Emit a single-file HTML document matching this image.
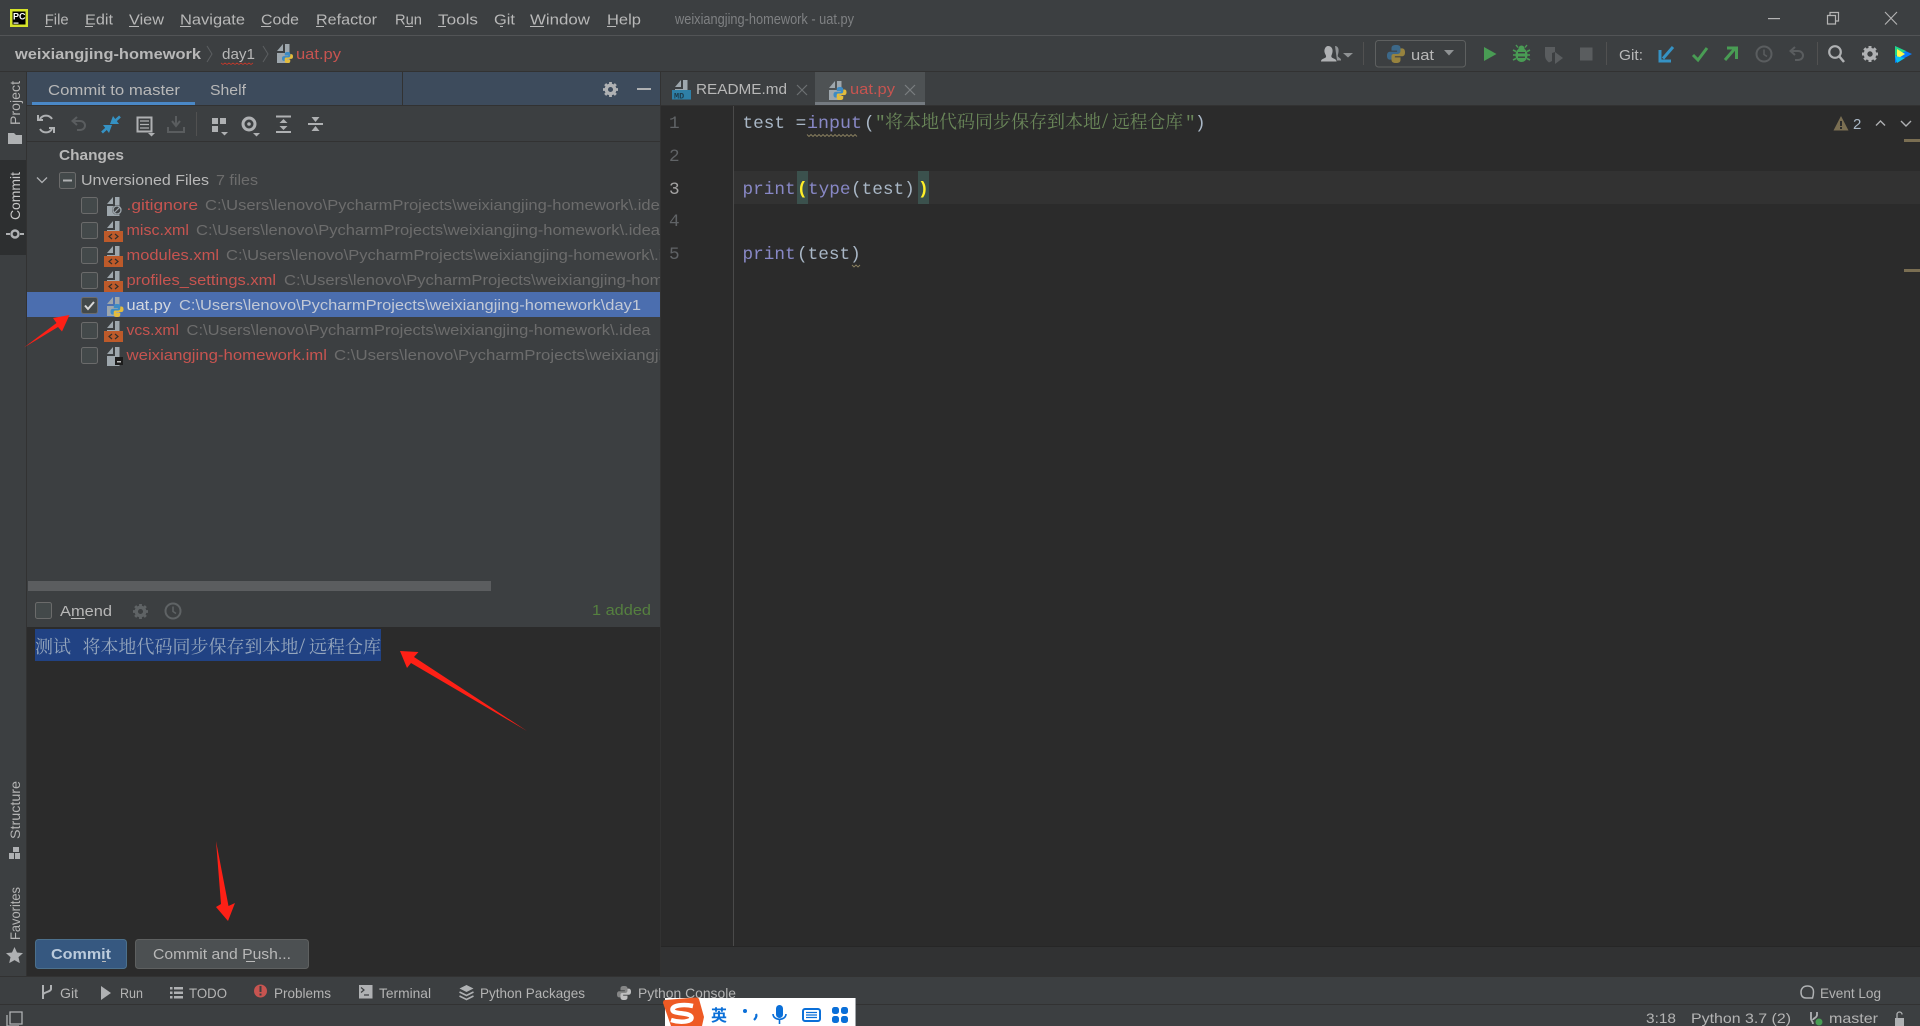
<!DOCTYPE html>
<html><head><meta charset="utf-8"><title>weixiangjing-homework - uat.py</title>
<style>html,body{margin:0;padding:0;background:#3c3f41;width:1920px;height:1026px;overflow:hidden}svg{display:block}
text{font-family:"Liberation Sans","Noto Sans CJK SC",sans-serif;font-size:15px;white-space:pre}
.m{font-family:"Liberation Mono",monospace;font-size:17.7px}
.cj{font-family:"Liberation Serif","Noto Serif CJK SC",serif;font-size:18px}
.n{fill:#c75450}.p{fill:#6c6c6c}.b{fill:#b8b8b8}.s{font-size:14px;fill:#b4b4b4}</style></head>
<body>
<svg width="1920" height="1026" viewBox="0 0 1920 1026" xmlns="http://www.w3.org/2000/svg">
<defs>
<clipPath id="cl"><rect x="27" y="140" width="633" height="440"/></clipPath>
<symbol id="py" viewBox="0 0 16 16" overflow="visible"><path d="M8 0C5 0 4 1 4 3v2h5v1H3C1 6 0 7 0 9.500S1 13 3 13h1v-2c0-2 1-3 3-3h3c1.500 0 2-1 2-2V3c0-2-1-3-4-3z" fill="#3d8bc4"/><path d="M8 16c3 0 4-1 4-3v-2H7v-1h6c2 0 3-1 3-3.500S15 3 13 3h-1v2c0 2-1 3-3 3H6C4.500 8 4 9 4 10v3c0 2 1 3 4 3z" fill="#e3bc3c"/></symbol>
<g id="fi"><path d="M1 8L7 8L7 1Z" fill="#9ea7ad"/><path d="M9 1H13.500V20H1V10H9Z" fill="#9ea7ad"/></g>
<g id="fit"><path d="M1 8L7 8L7 1Z" fill="#9ea7ad"/><path d="M9 1H13.500V11H1V10H9Z" fill="#9ea7ad"/></g>
<g id="xml"><path d="M3 8L9 8L9 1Z" fill="#9ea7ad"/><path d="M11 1H15.500V11H3V10H11Z" fill="#9ea7ad"/><rect x="0" y="11" width="19" height="11" fill="#bd5a2a"/><path d="M8 14l-3 2.500 3 2.500M11 14l3 2.500-3 2.500" stroke="#33302c" stroke-width="1.200" fill="none"/></g>
<symbol id="gear" viewBox="0 0 16 16" overflow="visible"><circle cx="8" cy="8" r="4.500" fill="none" stroke="currentColor" stroke-width="3.600"/><g stroke="currentColor" stroke-width="3"><path d="M8 0v3M8 13v3M0 8h3M13 8h3M2.300 2.300l2 2M11.700 11.700l2 2M2.300 13.700l2-2M11.700 4.300l2-2"/></g></symbol>
<symbol id="clock" viewBox="0 0 18 18" overflow="visible"><circle cx="9" cy="9" r="7.500" fill="none" stroke="currentColor" stroke-width="2"/><path d="M9 4.500V9.500l3 2" fill="none" stroke="currentColor" stroke-width="1.500"/></symbol>
<symbol id="undo" viewBox="0 0 16 16" overflow="visible"><path d="M6 1L1.500 5 6 9M2 5h7c3 0 5 2 5 4.500S12 14 9 14H6" fill="none" stroke="currentColor" stroke-width="2"/></symbol>
</defs>

<rect width="1920" height="1026" fill="#3c3f41"/>
<!-- title bar -->
<rect x="0" y="35" width="1920" height="1" fill="#525456"/>
<rect x="10" y="9" width="18" height="18" fill="#d6e32a"/><rect x="12.500" y="11.500" width="13" height="13" fill="#000"/>
<text x="13" y="19.500" style="font-size:9px;font-weight:bold" fill="#fff">PC</text><rect x="13.500" y="22.500" width="5" height="1.200" fill="#fff"/>
<g fill="#b8b8b8">
<text x="44.700" y="24.500" textLength="24" lengthAdjust="spacingAndGlyphs">File</text>
<text x="85" y="24.500" textLength="28" lengthAdjust="spacingAndGlyphs">Edit</text>
<text x="129" y="24.500" textLength="35" lengthAdjust="spacingAndGlyphs">View</text>
<text x="180" y="24.500" textLength="65" lengthAdjust="spacingAndGlyphs">Navigate</text>
<text x="261" y="24.500" textLength="38" lengthAdjust="spacingAndGlyphs">Code</text>
<text x="316" y="24.500" textLength="61" lengthAdjust="spacingAndGlyphs">Refactor</text>
<text x="395" y="24.500" textLength="27" lengthAdjust="spacingAndGlyphs">Run</text>
<text x="438" y="24.500" textLength="40" lengthAdjust="spacingAndGlyphs">Tools</text>
<text x="494" y="24.500" textLength="21" lengthAdjust="spacingAndGlyphs">Git</text>
<text x="530" y="24.500" textLength="60" lengthAdjust="spacingAndGlyphs">Window</text>
<text x="607" y="24.500" textLength="34" lengthAdjust="spacingAndGlyphs">Help</text>
<rect x="45" y="26" width="7" height="1"/><rect x="85" y="26" width="8" height="1"/><rect x="129" y="26" width="10" height="1"/><rect x="180" y="26" width="11" height="1"/><rect x="261" y="26" width="10" height="1"/><rect x="316" y="26" width="8" height="1"/><rect x="405" y="26" width="8" height="1"/><rect x="438" y="26" width="8" height="1"/><rect x="500" y="26" width="3" height="1"/><rect x="530" y="26" width="14" height="1"/><rect x="607" y="26" width="9" height="1"/>
</g>
<text x="675" y="24" textLength="179" lengthAdjust="spacingAndGlyphs" fill="#7f8183">weixiangjing-homework - uat.py</text>
<rect x="1768" y="18" width="12" height="1.200" fill="#b4b4b4"/>
<path d="M1827.500 15.500h8v8.500h-8zM1830 15V12.500h8.500v8.500H1836" fill="none" stroke="#b4b4b4" stroke-width="1.200"/>
<path d="M1885 12l12 12.500M1897 12l-12 12.500" stroke="#b4b4b4" stroke-width="1.100"/>

<!-- nav bar -->
<rect x="0" y="71" width="1920" height="1" fill="#323232"/>
<text x="15" y="59" textLength="186" lengthAdjust="spacingAndGlyphs" font-weight="bold" fill="#b8b8b8">weixiangjing-homework</text>
<path d="M207 46l5 8-5 8M263 46l5 8-5 8" stroke="#5c5f61" fill="none"/>
<text x="222" y="59" textLength="33" lengthAdjust="spacingAndGlyphs" fill="#b8b8b8">day1</text>
<path d="M221 63l2 1.500 2-1.500 2 1.500 2-1.500 2 1.500 2-1.500 2 1.500 2-1.500 2 1.500 2-1.500 2 1.500 2-1.500 2 1.500 2-1.500 2 1.500 2-1.500" stroke="#c0392b" stroke-width=".8" fill="none"/>
<use href="#fi" x="276" y="43"/><use href="#py" x="281" y="52" width="13" height="11"/>
<text x="296" y="59" textLength="45" lengthAdjust="spacingAndGlyphs" class="n">uat.py</text>

<!-- right toolbar -->
<path d="M1335 46c3 0 4 3 3.500 6s-1 3.500-.5 4.500 2.500 1.500 3 3v1h-4" fill="#8f9294"/>
<path d="M1328 46c3.500 0 5 3 4.500 6s-1.500 3.500-1 5 4.500 1.500 5 4v.5h-15.500v-.5c.5-2.500 4.500-2.500 5-4s-1-2.500-1.500-5 1-6 3.500-6z" fill="#afb1b3"/>
<path d="M1343 53h10l-5 4.500z" fill="#8f9294"/>
<rect x="1363" y="42" width="1" height="23" fill="#515151"/>
<rect x="1375.500" y="40.500" width="90" height="26.500" rx="3" fill="none" stroke="#5e6060"/>
<g opacity=".55"><use href="#py" x="1387" y="45" width="18" height="18"/></g>
<text x="1411" y="60" textLength="23" lengthAdjust="spacingAndGlyphs" class="b">uat</text>
<path d="M1444 50h10l-5 5.500z" fill="#8f9294"/>
<path d="M1484 47l12.500 7-12.500 7z" fill="#499c54"/>
<g fill="#499c54"><ellipse cx="1521.500" cy="55" rx="6" ry="7"/><circle cx="1521.500" cy="48.500" r="3"/><path d="M1516 45l2 2.500M1527 45l-2 2.500" stroke="#499c54" stroke-width="1.400"/><path d="M1513 50l3 1.500M1530 50l-3 1.500M1513 55h3M1530 55h-3M1513 60l3-1.500M1530 60l-3-1.500" stroke="#499c54" stroke-width="1.600"/></g>
<rect x="1518" y="52" width="7" height="1.400" fill="#3c3f41"/><rect x="1518" y="56.500" width="7" height="1.400" fill="#3c3f41"/>
<path d="M1545 47h10v5l-3 1v8l-3 1.500c-2.500-2-4-4-4-7.500z" fill="#5a5d5f"/><path d="M1555 52l8 6-8 6z" fill="#5a5d5f"/>
<rect x="1580" y="47.500" width="12.500" height="13" fill="#5a5d5f"/>
<rect x="1606" y="42" width="1" height="23" fill="#515151"/>
<text x="1619" y="60" textLength="24" lengthAdjust="spacingAndGlyphs" class="b">Git:</text>
<path d="M1673 47l-10 11.500M1660 50v11h11" stroke="#3592c4" stroke-width="3" fill="none"/>
<path d="M1693 55l5 5 9-12" stroke="#499c54" stroke-width="3" fill="none"/>
<path d="M1725 60l10-11.500M1727 48h9.500v11" stroke="#499c54" stroke-width="3" fill="none"/>
<use href="#clock" x="1755" y="45" width="18" height="18" color="#5a5d5f"/>
<use href="#undo" x="1789" y="46" width="16" height="16" color="#5a5d5f"/>
<rect x="1817" y="42" width="1" height="23" fill="#515151"/>
<circle cx="1835" cy="52" r="5.800" fill="none" stroke="#afb1b3" stroke-width="2.200"/><path d="M1839 56l5 6" stroke="#afb1b3" stroke-width="2.500"/>
<use href="#gear" x="1862" y="46" width="16" height="16" color="#afb1b3"/>
<path d="M1895 46l17 8-17 9z" fill="#087cfa"/><path d="M1895 46l11 5-11 5z" fill="#21d789"/><path d="M1897 49l8 5-8 5z" fill="#fcf84a"/><path d="M1895 56l2 7 8-5z" fill="#07c3f2"/>

<!-- left strip -->
<rect x="26" y="72" width="1" height="904" fill="#323232"/>
<rect x="0" y="160" width="26" height="95" fill="#2d2f30"/>
<text transform="translate(20,125) rotate(-90)" textLength="44" lengthAdjust="spacingAndGlyphs" style="font-size:14px" fill="#b4b4b4">Project</text>
<path d="M8 133h6l2 2h6v9H8z" fill="#afb1b3"/>
<text transform="translate(20,220) rotate(-90)" textLength="48" lengthAdjust="spacingAndGlyphs" style="font-size:14px" fill="#c8c8c8">Commit</text>
<circle cx="15" cy="234" r="3.500" fill="none" stroke="#afb1b3" stroke-width="2.400"/><path d="M6 234h4M20 234h4" stroke="#afb1b3" stroke-width="2"/>
<text transform="translate(20,839) rotate(-90)" textLength="58" lengthAdjust="spacingAndGlyphs" style="font-size:14px" fill="#b4b4b4">Structure</text>
<path d="M13 847h6v5h-6zM9 853h5v6H9zM15 853h5v6h-5z" fill="#afb1b3"/>
<text transform="translate(20,940) rotate(-90)" textLength="53" lengthAdjust="spacingAndGlyphs" style="font-size:14px" fill="#b4b4b4">Favorites</text>
<path d="M14.500 947l2.500 5.500 6 .6-4.500 4 1.300 6-5.300-3-5.300 3 1.300-6-4.500-4 6-.6z" fill="#afb1b3"/>

<!-- commit panel -->
<rect x="27" y="72" width="633" height="33" fill="#3d4b5c"/>
<rect x="27" y="105" width="633" height="1" fill="#323232"/>
<rect x="402" y="72" width="1" height="33" fill="#323232"/>
<rect x="32" y="102" width="163" height="3" fill="#4a88c7"/>
<text x="48" y="95" textLength="132" lengthAdjust="spacingAndGlyphs" class="b">Commit to master</text>
<text x="210" y="95" textLength="36" lengthAdjust="spacingAndGlyphs" class="b">Shelf</text>
<use href="#gear" x="603" y="82" width="15" height="15" color="#afb1b3"/>
<rect x="637" y="88" width="14" height="2" fill="#afb1b3"/>
<!-- commit toolbar -->
<rect x="27" y="141" width="633" height="1" fill="#323232"/>
<rect x="196" y="112" width="1" height="24" fill="#515151"/>
<path d="M52 119a7 7 0 0 0-12 0M40 129a7 7 0 0 0 12 0M38 115v5h5M54 133v-5h-5" stroke="#afb1b3" stroke-width="2" fill="none"/>
<use href="#undo" x="71" y="116" width="16" height="16" color="#5a5d5f"/>
<path d="M110 124h9l-6-8z" fill="#3592c4"/><path d="M120 116.500l-5 4.500" stroke="#3592c4" stroke-width="2.600"/>
<path d="M112 125h-9l6 8z" fill="#3592c4"/><path d="M102 132.500l5-4.500" stroke="#3592c4" stroke-width="2.600"/>
<path d="M137.500 117.500h14v14h-14z" fill="none" stroke="#afb1b3" stroke-width="2"/><path d="M140 121h9M140 124.500h9M140 128h9" stroke="#afb1b3" stroke-width="1.200"/><path d="M148 133h7l-3.500 3.500z" fill="#afb1b3"/>
<path d="M176 116v9M172 121l4 5 4-5M168 127v5h16v-5" stroke="#5a5d5f" stroke-width="2" fill="none"/>
<path d="M212 118h6v6h-6zM220 118h6v6h-6zM212 126h6v6h-6z" fill="#afb1b3"/><path d="M221 132h7l-3.500 3.500z" fill="#afb1b3"/>
<circle cx="249" cy="124" r="6" fill="none" stroke="#afb1b3" stroke-width="3"/><circle cx="249" cy="124" r="1.800" fill="#afb1b3"/><path d="M253 133h7l-3.500 3.500z" fill="#afb1b3"/>
<path d="M276 116.500h15M276 132h15" stroke="#afb1b3" stroke-width="2"/><path d="M283.500 119l4 4h-8zM283.500 130l4-4h-8z" fill="#afb1b3"/>
<path d="M308 124h15" stroke="#afb1b3" stroke-width="2"/><path d="M315.500 122l4-5h-8zM315.500 126l4 5h-8z" fill="#afb1b3"/>

<!-- file list -->
<text x="59" y="160" textLength="65" lengthAdjust="spacingAndGlyphs" font-weight="bold" class="b">Changes</text>
<path d="M37 177.500l5 5 5-5" stroke="#afb1b3" stroke-width="1.300" fill="none"/>
<rect x="59.500" y="172.500" width="16" height="16" rx="2" fill="#43494a" stroke="#6b6b6b"/><rect x="63" y="179.500" width="9" height="2" fill="#afb1b3"/>
<text x="81" y="185" textLength="128" lengthAdjust="spacingAndGlyphs" class="b">Unversioned Files</text>
<text x="216" y="185" textLength="42" lengthAdjust="spacingAndGlyphs" class="p">7 files</text>
<rect x="27" y="292" width="633" height="25" fill="#4b6eaf"/>
<g fill="#43494a" stroke="#6b6b6b">
<rect x="81.500" y="197.500" width="16" height="16" rx="2"/><rect x="81.500" y="222.500" width="16" height="16" rx="2"/><rect x="81.500" y="247.500" width="16" height="16" rx="2"/><rect x="81.500" y="272.500" width="16" height="16" rx="2"/><rect x="81.500" y="297.500" width="16" height="16" rx="2"/><rect x="81.500" y="322.500" width="16" height="16" rx="2"/><rect x="81.500" y="347.500" width="16" height="16" rx="2"/>
</g>
<path d="M85 305.500l3 3.500 6-7" stroke="#d8d8d8" stroke-width="2" fill="none"/>
<use href="#fi" x="106" y="196"/><circle cx="117" cy="210" r="5" fill="#3c3f41"/><circle cx="117" cy="210" r="4" fill="#3c3f41" stroke="#9ea7ad" stroke-width="1.300"/><path d="M114.500 212.500l5-5" stroke="#9ea7ad" stroke-width="1.200"/>
<use href="#xml" x="104" y="220"/><use href="#xml" x="104" y="245"/><use href="#xml" x="104" y="270"/><use href="#xml" x="104" y="320"/>
<use href="#fi" x="106" y="296"/><use href="#py" x="110.500" y="304" width="13" height="13"/>
<use href="#fi" x="106" y="346"/><rect x="115" y="357" width="8" height="8" fill="#1c1c1c"/><rect x="117" y="361" width="4" height="1.500" fill="#bbb"/>
<g clip-path="url(#cl)">
<text x="126.500" y="210" textLength="71.500" lengthAdjust="spacingAndGlyphs" class="n">.gitignore</text>
<text x="205" y="210" textLength="464" lengthAdjust="spacingAndGlyphs" class="p">C:\Users\lenovo\PycharmProjects\weixiangjing-homework\.idea</text>
<text x="126.500" y="235" textLength="62.500" lengthAdjust="spacingAndGlyphs" class="n">misc.xml</text>
<text x="196" y="235" textLength="464" lengthAdjust="spacingAndGlyphs" class="p">C:\Users\lenovo\PycharmProjects\weixiangjing-homework\.idea</text>
<text x="126.500" y="260" textLength="92.500" lengthAdjust="spacingAndGlyphs" class="n">modules.xml</text>
<text x="226" y="260" textLength="464" lengthAdjust="spacingAndGlyphs" class="p">C:\Users\lenovo\PycharmProjects\weixiangjing-homework\.idea</text>
<text x="126.500" y="285" textLength="149.500" lengthAdjust="spacingAndGlyphs" class="n">profiles_settings.xml</text>
<text x="284" y="285" textLength="464" lengthAdjust="spacingAndGlyphs" class="p">C:\Users\lenovo\PycharmProjects\weixiangjing-homework\.idea</text>
<text x="126.500" y="310" textLength="44.500" lengthAdjust="spacingAndGlyphs" fill="#d4d8de">uat.py</text>
<text x="179" y="310" textLength="462" lengthAdjust="spacingAndGlyphs" fill="#c2c9d6">C:\Users\lenovo\PycharmProjects\weixiangjing-homework\day1</text>
<text x="126.500" y="335" textLength="52.500" lengthAdjust="spacingAndGlyphs" class="n">vcs.xml</text>
<text x="186.500" y="335" textLength="464" lengthAdjust="spacingAndGlyphs" class="p">C:\Users\lenovo\PycharmProjects\weixiangjing-homework\.idea</text>
<text x="126.500" y="360" textLength="200.500" lengthAdjust="spacingAndGlyphs" class="n">weixiangjing-homework.iml</text>
<text x="334" y="360" textLength="430" lengthAdjust="spacingAndGlyphs" class="p">C:\Users\lenovo\PycharmProjects\weixiangjing-homework</text>
</g>
<rect x="28" y="581" width="463" height="10" fill="#5b5d5f"/>
<!-- amend -->
<rect x="35.500" y="602.500" width="16" height="16" rx="2" fill="#43494a" stroke="#6b6b6b"/>
<text x="60" y="616" textLength="52" lengthAdjust="spacingAndGlyphs" class="b">Amend</text><rect x="71" y="618" width="14" height="1" fill="#bbb"/>
<use href="#gear" x="133" y="604" width="15" height="15" color="#5f6365"/>
<use href="#clock" x="164" y="602" width="18" height="18" color="#5f6365"/>
<text x="592" y="615" textLength="59" lengthAdjust="spacingAndGlyphs" fill="#55803f">1 added</text>
<rect x="27" y="627" width="633" height="349" fill="#2b2b2b"/>
<rect x="35" y="629" width="346" height="32" fill="#214283"/>
<g opacity=".85">
<text x="35" y="653" class="cj" fill="#a9b7c6" textLength="36" lengthAdjust="spacingAndGlyphs">测试</text>
<text x="82.500" y="653" class="cj" fill="#a9b7c6" textLength="216" lengthAdjust="spacingAndGlyphs">将本地代码同步保存到本地</text>
<text x="299" y="653" style="font-family:'Liberation Serif',serif;font-size:22px" fill="#a9b7c6">/</text>
<text x="309" y="653" class="cj" fill="#a9b7c6" textLength="72" lengthAdjust="spacingAndGlyphs">远程仓库</text>
</g>
<!-- buttons -->
<rect x="35.500" y="939.500" width="91" height="29" rx="3" fill="#365880" stroke="#4c708c"/>
<text x="51" y="959" textLength="60" lengthAdjust="spacingAndGlyphs" font-weight="bold" fill="#bbcbdc">Commit</text><rect x="102" y="961" width="4" height="1" fill="#bbb"/>
<rect x="135.500" y="939.500" width="173" height="29" rx="3" fill="#4c5052" stroke="#5e6060"/>
<text x="153" y="959" textLength="138" lengthAdjust="spacingAndGlyphs" class="b">Commit and Push...</text><rect x="246" y="961" width="9" height="1" fill="#bbb"/>

<!-- editor -->
<rect x="660" y="72" width="1" height="904" fill="#323232"/>
<rect x="661" y="105" width="1259" height="1" fill="#323232"/>
<rect x="815" y="72" width="110" height="33" fill="#4e5254"/><rect x="815" y="102" width="110" height="3" fill="#747a80"/>
<use href="#fit" x="674" y="79"/><rect x="672" y="90" width="19" height="9.500" fill="#2e7fa6"/>
<text x="674" y="98.500" style="font-size:8.500px;font-family:'Liberation Mono',monospace" fill="#1d3c4c" font-weight="bold">MD</text>
<text x="696" y="94" textLength="91" lengthAdjust="spacingAndGlyphs" class="b">README.md</text>
<path d="M797 85l10 10M807 85l-10 10" stroke="#6c7072" stroke-width="1.200"/>
<use href="#fi" x="828" y="80"/><use href="#py" x="833.500" y="87" width="13" height="13"/>
<text x="850" y="94" textLength="45" lengthAdjust="spacingAndGlyphs" class="n">uat.py</text>
<path d="M905 85l10 10M915 85l-10 10" stroke="#7a7e80" stroke-width="1.200"/>
<rect x="661" y="106" width="1259" height="870" fill="#2b2b2b"/>
<rect x="661" y="946" width="1259" height="30" fill="#313233"/><rect x="661" y="946" width="1259" height="1" fill="#262626"/>
<rect x="734" y="171" width="1186" height="33" fill="#323232"/>
<rect x="733" y="106" width="1" height="840" fill="#4a4a4a"/>
<text x="669" y="128" class="m" fill="#606366">1</text><text x="669" y="161" class="m" fill="#606366">2</text><text x="669" y="194" class="m" fill="#a4a3a3">3</text><text x="669" y="226" class="m" fill="#606366">4</text><text x="669" y="259" class="m" fill="#606366">5</text>
<text x="742.500" y="128" class="m" fill="#a9b7c6">test =</text>
<text x="807" y="128" class="m" fill="#8888c6" textLength="55" lengthAdjust="spacingAndGlyphs">input</text>
<text x="864" y="128" class="m" fill="#a9b7c6">(</text>
<text x="875" y="128" class="m" fill="#6a8759">"</text>
<text x="885" y="128" class="cj" fill="#6a8759" textLength="216" lengthAdjust="spacingAndGlyphs">将本地代码同步保存到本地</text>
<text x="1102" y="128" style="font-size:22px;font-family:'Liberation Serif',serif" fill="#6a8759">/</text>
<text x="1112" y="128" class="cj" fill="#6a8759" textLength="71" lengthAdjust="spacingAndGlyphs">远程仓库</text>
<text x="1185" y="128" class="m" fill="#6a8759">"</text>
<text x="1195" y="128" class="m" fill="#a9b7c6">)</text>
<path d="M807 134.500l2 2 2-2 2 2 2-2 2 2 2-2 2 2 2-2 2 2 2-2 2 2 2-2 2 2 2-2 2 2 2-2 2 2 2-2 2 2 2-2 2 2 2-2 2 2 2-2 2 2" stroke="#8a8060" stroke-width=".9" fill="none"/>
<rect x="797" y="171" width="11" height="33" fill="#3b514d"/><rect x="918" y="171" width="11" height="33" fill="#3b514d"/>
<text x="742.500" y="194" class="m" fill="#8888c6">print</text>
<text x="797" y="194" class="m" fill="#ffef28" font-weight="bold">(</text>
<text x="808" y="194" class="m" fill="#8888c6">type</text>
<text x="851" y="194" class="m" fill="#a9b7c6">(test)</text>
<text x="918" y="194" class="m" fill="#ffef28" font-weight="bold">)</text>
<text x="742.500" y="259" class="m" fill="#8888c6">print</text>
<text x="797" y="259" class="m" fill="#a9b7c6">(test)</text>
<path d="M852 265l2 2 2-2 2 2 2-2" stroke="#8a8060" stroke-width=".9" fill="none"/>
<path d="M1841 116l7.500 14.500h-15z" fill="#7a6e52"/><rect x="1840" y="121" width="2" height="5" fill="#2b2b2b"/><rect x="1840" y="127" width="2" height="2" fill="#2b2b2b"/>
<text x="1853" y="129" style="font-size:15px" fill="#a9b7c6">2</text>
<path d="M1876 125.500l4.500-4.500 4.500 4.500M1901 121l5 5 5-5" stroke="#afb1b3" stroke-width="1.400" fill="none"/>
<rect x="1904" y="139" width="16" height="3" fill="#7a6e52"/><rect x="1904" y="269" width="16" height="3" fill="#7a6e52"/>

<!-- tool window bar -->
<rect x="0" y="976" width="1920" height="1" fill="#323232"/>
<rect x="0" y="1004" width="1920" height="1" fill="#323232"/>
<g>
<path d="M43 985v14M51 985v4c0 3-8 3-8 6" stroke="#afb1b3" stroke-width="2" fill="none"/>
<text x="60" y="998" textLength="18" lengthAdjust="spacingAndGlyphs" class="s">Git</text>
<path d="M101 986l10 7-10 7z" fill="#afb1b3"/>
<text x="120" y="998" textLength="23" lengthAdjust="spacingAndGlyphs" class="s">Run</text>
<path d="M170 987h2.500v2.500H170zM174 987h9v2.500h-9zM170 991.500h2.500v2.500H170zM174 991.500h9v2.500h-9zM170 996h2.500v2.500H170zM174 996h9v2.500h-9z" fill="#afb1b3"/>
<text x="189" y="998" textLength="38" lengthAdjust="spacingAndGlyphs" class="s">TODO</text>
<circle cx="260.500" cy="991" r="6.500" fill="#c75450"/><rect x="259.500" y="986" width="2" height="6" fill="#3c3f41"/><rect x="259.500" y="993.500" width="2" height="2" fill="#3c3f41"/>
<text x="274" y="998" textLength="57" lengthAdjust="spacingAndGlyphs" class="s">Problems</text>
<rect x="359" y="985" width="13.500" height="13.500" fill="#afb1b3"/><path d="M361 987.500l3 2.500-3 2.500M364 995h5" stroke="#3c3f41" stroke-width="1.200" fill="none"/>
<text x="379" y="998" textLength="52" lengthAdjust="spacingAndGlyphs" class="s">Terminal</text>
<path d="M466.500 985l7 3.500-7 3.500-7-3.500z" fill="#afb1b3"/><path d="M459.500 992l7 3.500 7-3.500M459.500 996l7 3.500 7-3.500" stroke="#afb1b3" stroke-width="1.600" fill="none"/>
<text x="480" y="998" textLength="105" lengthAdjust="spacingAndGlyphs" class="s">Python Packages</text>
<use href="#py" x="617" y="986" width="14" height="14" opacity=".8" style="filter:grayscale(1) brightness(1.200)"/>
<text x="638" y="998" textLength="98" lengthAdjust="spacingAndGlyphs" class="s">Python Console</text>
<path d="M1806 998c-4 0-5-3-5-6s2-6 6.500-6 6 3 6 6-1 6-1 6z" fill="none" stroke="#afb1b3" stroke-width="1.500"/>
<text x="1820" y="998" textLength="61" lengthAdjust="spacingAndGlyphs" class="s">Event Log</text>
</g>
<!-- status -->
<path d="M10 1012h12v12H10z" fill="none" stroke="#afb1b3" stroke-width="1.300"/><path d="M7 1015v11h12" fill="none" stroke="#afb1b3" stroke-width="1.300"/>
<text x="1646" y="1023" textLength="30" lengthAdjust="spacingAndGlyphs" class="s">3:18</text>
<text x="1691" y="1023" textLength="100" lengthAdjust="spacingAndGlyphs" class="s">Python 3.7 (2)</text>
<path d="M1811 1012v7c0 2 2 2 2 5M1817 1012v3c0 3-4 3-4 5" stroke="#afb1b3" stroke-width="1.800" fill="none"/><circle cx="1819" cy="1022" r="3.500" fill="#499c54"/>
<text x="1829" y="1023" textLength="49" lengthAdjust="spacingAndGlyphs" class="s">master</text>
<rect x="1895" y="1018" width="9" height="8" fill="#afb1b3"/><path d="M1897 1018v-3.500a2.500 2.500 0 0 1 5 0" fill="none" stroke="#afb1b3" stroke-width="1.300"/>

<!-- sogou -->
<rect x="665" y="998" width="190" height="28" fill="#ffffff"/><rect x="855" y="998" width="1" height="28" fill="#a0a4a8"/>
<path d="M665 1000L696 997.500Q698 997.500 699 999L704 1017L702 1026H671L663 1003Q663 1000 665 1000z" fill="#ee5a24"/>
<path d="M693 1006C684 1004 672 1005 672.500 1010C673 1014.500 691 1012 691.500 1017.500C692 1022 680 1023 671 1020" stroke="#fff" stroke-width="4.500" fill="none"/>
<text x="711" y="1021" style="font-size:16px;font-family:'Noto Sans CJK SC',sans-serif;font-weight:bold" fill="#0a6fd8">英</text>
<circle cx="745" cy="1011" r="2" fill="#0a6fd8"/><path d="M756 1014c1 2 0 4-2 6" stroke="#0a6fd8" stroke-width="2.200" fill="none"/>
<rect x="776" y="1005" width="7" height="13" rx="3.500" fill="#0a6fd8"/><path d="M773 1014c0 7 13 7 13 0M779.500 1020v4" stroke="#0a6fd8" stroke-width="1.600" fill="none"/>
<rect x="803" y="1009" width="17" height="12" rx="2" fill="none" stroke="#0a6fd8" stroke-width="2"/><path d="M806 1012.500h11M806 1015h11M806 1017.500h11" stroke="#0a6fd8" stroke-width="1.300"/>
<rect x="832" y="1007" width="7" height="7" rx="2.500" fill="#0a6fd8"/><rect x="841" y="1007" width="7" height="7" rx="2.500" fill="#0a6fd8"/><rect x="832" y="1016" width="7" height="7" rx="2.500" fill="#0a6fd8"/><rect x="841" y="1016" width="7" height="7" rx="2.500" fill="#0a6fd8"/>

<!-- red arrows -->
<g fill="#fe2016">
<path d="M69.500 315L53 318l3.500 5L24 347.500 58 327l4 4.500z"/>
<path d="M400 651l18.500 1-4.500 5L527 731 411 663l-4 5z"/>
<path d="M216 841L221 904 216 907l12 14 7-18-6.500 3z"/>
</g>
</svg>
</body></html>
